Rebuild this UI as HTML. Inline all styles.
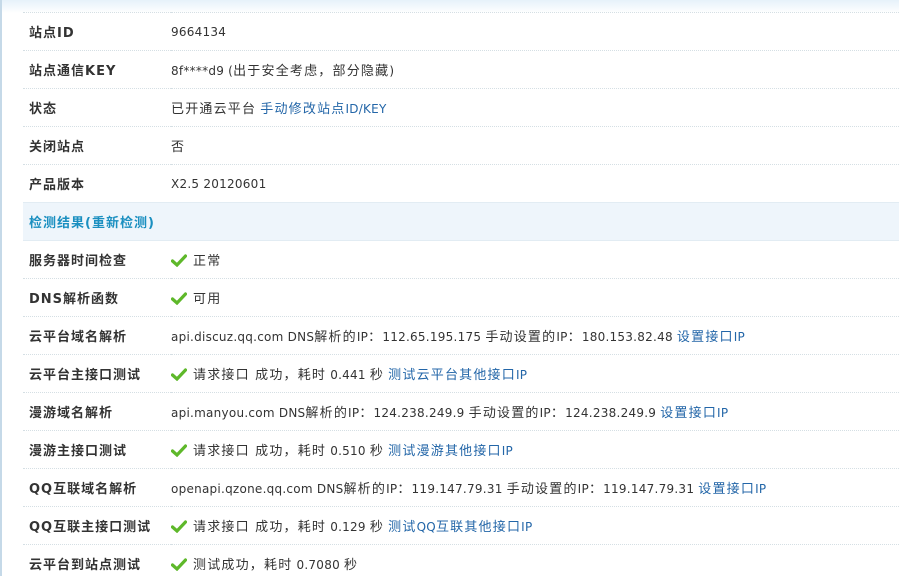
<!DOCTYPE html>
<html><head><meta charset="utf-8"><style>
body{margin:0;width:899px;height:576px;overflow:hidden;background:#fff;font-family:"DejaVu Sans","Noto Sans CJK SC",sans-serif;font-size:12px;color:#333;position:relative}
.top{position:absolute;left:0;top:0;width:899px;height:13px;background:linear-gradient(#e6f1fa,#fff)}
.lb{position:absolute;left:0;top:0;width:2px;height:576px;background:#c5d9e8}
table{position:absolute;left:23px;top:12px;width:876px;border-collapse:collapse}
td{height:37px;border-top:1px dotted #d5dfe4;padding:0;vertical-align:middle;letter-spacing:0.25px;white-space:nowrap}
td.l{width:142px;padding-left:6px;font-weight:bold;font-size:13px;letter-spacing:1px}
i{font-style:normal;font-size:13px;letter-spacing:1.2px}
a{color:#2366a8;text-decoration:none}
tr.h td{background:#eef5fb;color:#1a8fc0;font-weight:bold;border-top:1px solid #e2ecf3}
tr.a td{border-top:1px solid #e2ecf3}
.ok{display:inline-block;width:16px;height:13px;vertical-align:-2px;margin-right:6px}
</style></head><body>
<div class="top"></div><div class="lb"></div>
<table>
<tr><td class="l">站点ID</td><td>9664134</td></tr>
<tr><td class="l">站点通信KEY</td><td>8f****d9 (<i>出于安全考虑，部分隐藏</i>)</td></tr>
<tr><td class="l">状态</td><td><i>已开通云平台</i> <a><i>手动修改站点</i>ID/KEY</a></td></tr>
<tr><td class="l">关闭站点</td><td><i>否</i></td></tr>
<tr><td class="l">产品版本</td><td>X2.5 20120601</td></tr>
<tr class="h"><td class="l" style="color:#1a8fc0">检测结果(重新检测)</td><td></td></tr>
<tr class="a"><td class="l">服务器时间检查</td><td><svg class="ok" viewBox="0 0 16 13"><path d="M1.5 7L6 11L14.5 2" stroke="#5eb82a" stroke-width="3.2" fill="none" stroke-linecap="round"/></svg><i>正常</i></td></tr>
<tr><td class="l">DNS解析函数</td><td><svg class="ok" viewBox="0 0 16 13"><path d="M1.5 7L6 11L14.5 2" stroke="#5eb82a" stroke-width="3.2" fill="none" stroke-linecap="round"/></svg><i>可用</i></td></tr>
<tr><td class="l">云平台域名解析</td><td>api.discuz.qq.com DNS<i>解析的</i>IP<i>：</i>112.65.195.175 <i>手动设置的</i>IP<i>：</i>180.153.82.48 <a><i>设置接口</i>IP</a></td></tr>
<tr><td class="l">云平台主接口测试</td><td><svg class="ok" viewBox="0 0 16 13"><path d="M1.5 7L6 11L14.5 2" stroke="#5eb82a" stroke-width="3.2" fill="none" stroke-linecap="round"/></svg><i>请求接口 成功，耗时</i> 0.441 <i>秒</i> <a><i>测试云平台其他接口</i>IP</a></td></tr>
<tr><td class="l">漫游域名解析</td><td>api.manyou.com DNS<i>解析的</i>IP<i>：</i>124.238.249.9 <i>手动设置的</i>IP<i>：</i>124.238.249.9 <a><i>设置接口</i>IP</a></td></tr>
<tr><td class="l">漫游主接口测试</td><td><svg class="ok" viewBox="0 0 16 13"><path d="M1.5 7L6 11L14.5 2" stroke="#5eb82a" stroke-width="3.2" fill="none" stroke-linecap="round"/></svg><i>请求接口 成功，耗时</i> 0.510 <i>秒</i> <a><i>测试漫游其他接口</i>IP</a></td></tr>
<tr><td class="l">QQ互联域名解析</td><td>openapi.qzone.qq.com DNS<i>解析的</i>IP<i>：</i>119.147.79.31 <i>手动设置的</i>IP<i>：</i>119.147.79.31 <a><i>设置接口</i>IP</a></td></tr>
<tr><td class="l">QQ互联主接口测试</td><td><svg class="ok" viewBox="0 0 16 13"><path d="M1.5 7L6 11L14.5 2" stroke="#5eb82a" stroke-width="3.2" fill="none" stroke-linecap="round"/></svg><i>请求接口 成功，耗时</i> 0.129 <i>秒</i> <a><i>测试</i>QQ<i>互联其他接口</i>IP</a></td></tr>
<tr><td class="l">云平台到站点测试</td><td><svg class="ok" viewBox="0 0 16 13"><path d="M1.5 7L6 11L14.5 2" stroke="#5eb82a" stroke-width="3.2" fill="none" stroke-linecap="round"/></svg><i>测试成功，耗时</i> 0.7080 <i>秒</i></td></tr>
</table>
</body></html>
